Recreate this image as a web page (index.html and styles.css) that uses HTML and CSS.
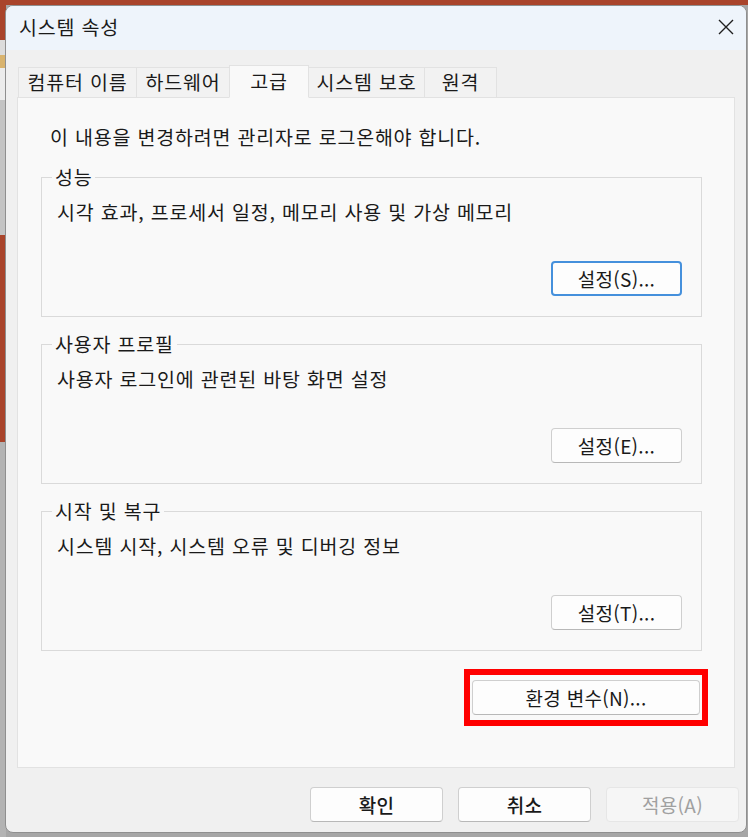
FILE: index.html
```html
<!DOCTYPE html>
<html lang="ko">
<head>
<meta charset="utf-8">
<title>시스템 속성</title>
<link rel="stylesheet" href="styles.css">
</head>
<body>
<div class="window">
  <div class="titlebar">
    <span class="title">시스템 속성</span>
    <svg class="close" width="16" height="16" viewBox="0 0 16 16"><path d="M1 1 L15 15 M15 1 L1 15" stroke="#1f1f1f" stroke-width="1.4" fill="none"/></svg>
  </div>
  <div class="body">
    <div class="tabs">
      <div class="tab t1">컴퓨터 이름</div>
      <div class="tab t2">하드웨어</div>
      <div class="tab t3 active">고급</div>
      <div class="tab t4">시스템 보호</div>
      <div class="tab t5">원격</div>
    </div>
    <div class="panel">
      <p class="note">이 내용을 변경하려면 관리자로 로그온해야 합니다.</p>
      <fieldset class="group">
        <legend>성능</legend>
        <p class="desc">시각 효과, 프로세서 일정, 메모리 사용 및 가상 메모리</p>
        <div class="btnrow"><button class="btn focus">설정(S)...</button></div>
      </fieldset>
      <fieldset class="group">
        <legend>사용자 프로필</legend>
        <p class="desc">사용자 로그인에 관련된 바탕 화면 설정</p>
        <div class="btnrow"><button class="btn">설정(E)...</button></div>
      </fieldset>
      <fieldset class="group">
        <legend>시작 및 복구</legend>
        <p class="desc">시스템 시작, 시스템 오류 및 디버깅 정보</p>
        <div class="btnrow"><button class="btn">설정(T)...</button></div>
      </fieldset>
      <div class="env-row">
        <div class="highlight"><button class="btn wide">환경 변수(N)...</button></div>
      </div>
    </div>
    <div class="footer">
      <button class="btn fbtn">확인</button>
      <button class="btn fbtn">취소</button>
      <button class="btn fbtn disabled">적용(A)</button>
    </div>
  </div>
</div>
</body>
</html>
```
FILE: styles.css
```css
* { box-sizing: border-box; }
html, body { margin: 0; width: 748px; height: 837px; overflow: hidden; }
body {
  font-family: "Noto Sans CJK KR", "Noto Sans", sans-serif;
  font-size: 19.5px;
  letter-spacing: 0.8px;
  line-height: 24px;
  color: #1a1a1a;
  padding: 5px 1px 0 5px;
  background:
    linear-gradient(#a9442b, #a9442b) top left / 100% 5px no-repeat,
    linear-gradient(to bottom, #a9442b 0 40px, #dcdcdc 40px 55px, #d9b36d 55px 68px, #ececec 68px 100px, #c4c4c4 100px 235px, #a9442b 235px 442px, #b3b3b3 442px) top left / 6px 100% no-repeat,
    #a6a6a6;
}
.window {
  width: 742px;
  height: 828px;
  border: 1px solid #8f8f8f;
  border-radius: 8px;
  background: #f0f0f0;
  display: flex;
  flex-direction: column;
  overflow: hidden;
}
.titlebar {
  height: 44px;
  flex: none;
  background: #eef4fb;
  display: flex;
  align-items: center;
  justify-content: space-between;
  padding: 0 12px 2px 13px;
}
.close { display: block; }
.body {
  flex: 1;
  display: flex;
  flex-direction: column;
  padding: 15px 0 10px 0;
}
.tabs {
  display: flex;
  align-items: flex-end;
  margin: 0 0 -1px 12px;
  flex: none;
}
.tab {
  height: 31px;
  border: 1px solid #e2e2e2;
  background: #f2f2f2;
  margin-left: -1px;
  text-align: center;
  line-height: 28px;
  white-space: nowrap;
}
.t1 { width: 119px; margin-left: 0; }
.t2 { width: 94px; }
.t3 { width: 80px; }
.t4 { width: 117px; }
.t5 { width: 73px; }
.tab.active {
  height: 33px;
  background: #f9f9f9;
  border-bottom-color: #f9f9f9;
  line-height: 30px;
  position: relative;
  z-index: 1;
}
.panel {
  flex: 1;
  margin: 0 11px;
  border: 1px solid #e2e2e2;
  background: #f9f9f9;
  padding: 27px 32px 0 23px;
  display: flex;
  flex-direction: column;
}
.note { margin: 0 0 16px 9px; }
.group {
  margin: 0 0 15px 0;
  padding: 0 0 20px 0;
  border: 1px solid #dadada;
  min-width: 0;
}
.group legend {
  margin-left: 10px;
  padding: 0 3px;
  line-height: 24px;
}
.desc { margin: 11px 0 0 15px; }
.btnrow {
  display: flex;
  justify-content: flex-end;
  margin-top: 37px;
  padding-right: 19px;
}
.btn {
  height: 35px;
  width: 131px;
  border: 1px solid #cfcfcf;
  border-bottom-color: #b8b8b8;
  border-radius: 4px;
  background: #fdfdfd;
  font: inherit;
  font-size: 19px;
  letter-spacing: 0.3px;
  color: #1a1a1a;
  padding: 0;
  display: flex;
  align-items: center;
  justify-content: center;
}
.btn.focus { border: 2px solid #4590dc; }
.env-row {
  display: flex;
  justify-content: flex-end;
  margin-top: 3px;
  margin-right: -6px;
}
.highlight {
  border: 6px solid #ff0000;
  padding: 5px 2px;
}
.btn.wide { width: 228px; }
.footer {
  display: flex;
  justify-content: flex-end;
  gap: 15px;
  margin-top: 19px;
  padding-right: 7px;
  flex: none;
}
.fbtn { width: 133px; font-weight: 500; }
.btn.disabled {
  color: #a0a0a0;
  background: #f6f6f6;
  border-color: #e6e6e6;
  font-weight: 400;
}
```
